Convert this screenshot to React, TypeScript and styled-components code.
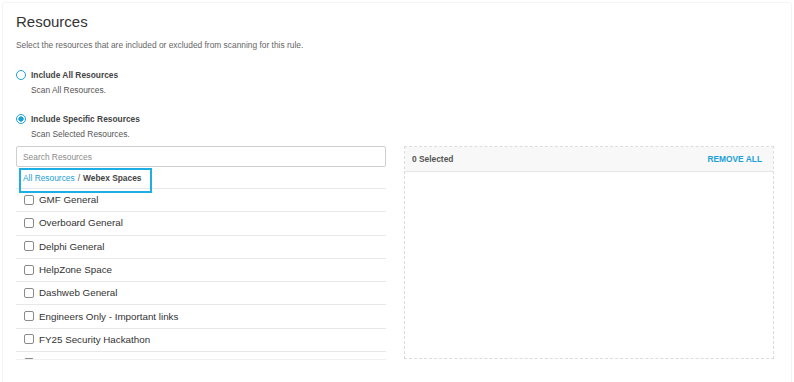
import styled, { createGlobalStyle } from "styled-components";

const GlobalStyle = createGlobalStyle`
  html, body {
    margin: 0;
    padding: 0;
    background: #ffffff;
  }
  body {
    font-family: "Liberation Sans", Arial, sans-serif;
    color: #333;
  }
`;

const Page = styled.div`
  width: 794px;
  height: 382px;
  box-sizing: border-box;
  padding: 2px 2px 0;
  overflow: hidden;
`;

const Card = styled.section`
  box-sizing: border-box;
  height: 400px;
  border: 1px solid #f4f4f4;
  border-radius: 3px;
  padding: 10px 0 0 13px;
`;

const Title = styled.h1`
  margin: 0;
  font-size: 15px;
  line-height: 18px;
  font-weight: 400;
  color: #333;
`;

const Subtitle = styled.p`
  margin: 8px 0 0;
  font-size: 8.4px;
  line-height: 12px;
  color: #666;
`;

const RadioGroup = styled.div`
  display: flex;
  flex-direction: column;
  gap: 17px;
  margin-top: 18px;
`;

const RadioOption = styled.label`
  display: grid;
  grid-template-columns: 10px 1fr;
  column-gap: 5px;
  row-gap: 3px;
  align-items: center;
  cursor: pointer;
`;

const RadioCircle = styled.span<{ $checked?: boolean }>`
  box-sizing: border-box;
  width: 10px;
  height: 10px;
  border-radius: 50%;
  border: 1.3px solid #1ba0d8;
  background: ${(p) =>
    p.$checked ? "radial-gradient(circle, #1ba0d8 0 2.4px, #fff 2.9px)" : "#fff"};
`;

const RadioLabel = styled.span`
  font-size: 8.4px;
  line-height: 12px;
  font-weight: 700;
  color: #444;
`;

const RadioHint = styled.span`
  grid-column: 2;
  font-size: 8.4px;
  line-height: 12px;
  color: #555;
`;

const Columns = styled.div`
  display: grid;
  grid-template-columns: 370px 370px;
  column-gap: 18px;
  margin-top: 6px;
`;

const LeftColumn = styled.div`
  position: relative;
  display: flex;
  flex-direction: column;
`;

const SearchInput = styled.input`
  box-sizing: border-box;
  width: 100%;
  height: 21px;
  margin: 0;
  padding: 0 6px;
  border: 1px solid #cfcfcf;
  border-radius: 2px;
  font-family: inherit;
  font-size: 8.4px;
  color: #333;
  outline: none;

  &::placeholder {
    color: #8c8c8c;
  }
`;

const Breadcrumb = styled.div`
  display: flex;
  align-items: center;
  gap: 3px;
  height: 22px;
  padding: 1px 7px 0;
  box-sizing: border-box;
  border-bottom: 1px solid #e8e8e8;
  font-size: 8.4px;
`;

const Crumb = styled.a`
  color: #1ba0d8;
  text-decoration: none;
  cursor: pointer;
`;

const CrumbSep = styled.span`
  color: #555;
`;

const CrumbCurrent = styled.span`
  color: #444;
  font-weight: 700;
`;

const Highlight = styled.div`
  position: absolute;
  left: 3px;
  top: 22px;
  width: 133px;
  height: 25px;
  box-sizing: border-box;
  border: 2px solid #1eaee6;
  pointer-events: none;
`;

const List = styled.ul`
  list-style: none;
  margin: 0;
  padding: 0;
  height: 170px;
  overflow: hidden;
  border-bottom: 1px solid #f0f0f0;
`;

const Row = styled.li<{ $faded?: boolean }>`
  display: flex;
  align-items: center;
  gap: 5px;
  height: 23.3px;
  box-sizing: border-box;
  padding: 0 8px 1px;
  border-bottom: 1px solid #e8e8e8;
  font-size: 9.8px;
  color: ${(p) => (p.$faded ? "#999" : "#333")};
`;

const Check = styled.span`
  box-sizing: border-box;
  width: 10px;
  height: 10px;
  flex: none;
  border: 1px solid #8a8a8a;
  border-radius: 2px;
  background: #fff;
`;

const SelectedPanel = styled.div`
  box-sizing: border-box;
  height: 213px;
  border: 1px dashed #dcdcdc;
  display: flex;
  flex-direction: column;
`;

const PanelHeader = styled.div`
  display: flex;
  align-items: center;
  justify-content: space-between;
  height: 24px;
  padding: 0 11px 0 7px;
  background: #f8f8f8;
  border-bottom: 1px solid #e6e6e6;
  font-size: 8.4px;
  font-weight: 700;
`;

const SelectedCount = styled.span`
  color: #555;
`;

const RemoveAll = styled.button`
  border: none;
  background: transparent;
  padding: 0;
  font-family: inherit;
  font-size: 8.4px;
  font-weight: 700;
  color: #1ba0d8;
  cursor: pointer;
`;

const resources = [
  "GMF General",
  "Overboard General",
  "Delphi General",
  "HelpZone Space",
  "Dashweb General",
  "Engineers Only - Important links",
  "FY25 Security Hackathon",
  "Cyber General",
];

const App = () => {
  return (
    <>
      <GlobalStyle />
      <Page>
        <Card>
          <Title>Resources</Title>
          <Subtitle>
            Select the resources that are included or excluded from scanning for this rule.
          </Subtitle>
          <RadioGroup>
            <RadioOption>
              <RadioCircle />
              <RadioLabel>Include All Resources</RadioLabel>
              <RadioHint>Scan All Resources.</RadioHint>
            </RadioOption>
            <RadioOption>
              <RadioCircle $checked />
              <RadioLabel>Include Specific Resources</RadioLabel>
              <RadioHint>Scan Selected Resources.</RadioHint>
            </RadioOption>
          </RadioGroup>
          <Columns>
            <LeftColumn>
              <SearchInput placeholder="Search Resources" />
              <Breadcrumb>
                <Crumb>All Resources</Crumb>
                <CrumbSep>/</CrumbSep>
                <CrumbCurrent>Webex Spaces</CrumbCurrent>
              </Breadcrumb>
              <Highlight />
              <List>
                {resources.map((name, i) => (
                  <Row key={name} $faded={i === resources.length - 1}>
                    <Check />
                    {name}
                  </Row>
                ))}
              </List>
            </LeftColumn>
            <SelectedPanel>
              <PanelHeader>
                <SelectedCount>0 Selected</SelectedCount>
                <RemoveAll>REMOVE ALL</RemoveAll>
              </PanelHeader>
            </SelectedPanel>
          </Columns>
        </Card>
      </Page>
    </>
  );
};

export default App;
